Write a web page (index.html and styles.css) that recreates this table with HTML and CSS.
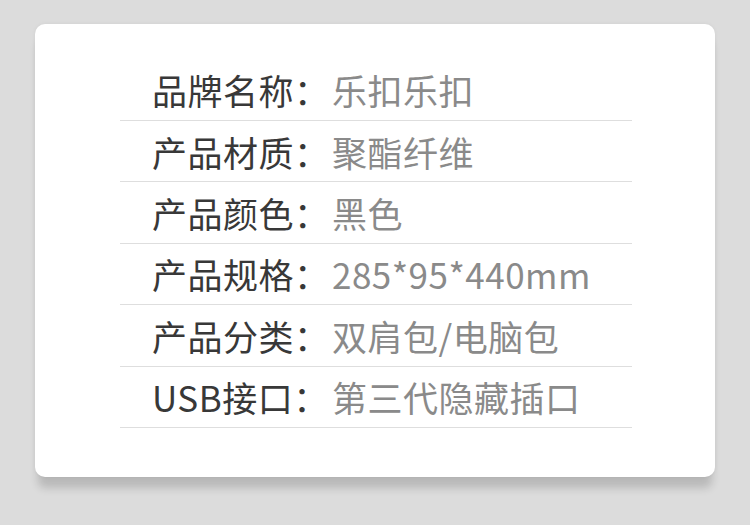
FILE: index.html
```html
<!DOCTYPE html>
<html lang="zh-CN">
<head>
    <meta charset="UTF-8">
    <meta name="viewport" content="width=device-width, initial-scale=1.0">
    <title>产品参数</title>
    <link rel="stylesheet" href="styles.css">
</head>
<body>
<div class="card">
    <div class="spec-list">
        <div class="spec-row">
            <span class="label">品牌名称：</span>
            <span class="value">乐扣乐扣</span>
        </div>
        <div class="spec-row">
            <span class="label">产品材质：</span>
            <span class="value">聚酯纤维</span>
        </div>
        <div class="spec-row">
            <span class="label">产品颜色：</span>
            <span class="value">黑色</span>
        </div>
        <div class="spec-row">
            <span class="label">产品规格：</span>
            <span class="value">285*95*440mm</span>
        </div>
        <div class="spec-row">
            <span class="label">产品分类：</span>
            <span class="value">双肩包/电脑包</span>
        </div>
        <div class="spec-row">
            <span class="label">USB接口：</span>
            <span class="value">第三代隐藏插口</span>
        </div>
    </div>
</div>
</body>
</html>
```

FILE: styles.css
```css
body {
    margin: 0;
    padding: 24px 35px;
    background-color: #dcdcdc;
    font-family: "Noto Sans CJK SC", "Noto Sans", sans-serif;
}
.card {
    width: 680px;
    height: 453px;
    box-sizing: border-box;
    background-color: #fff;
    border-radius: 10px;
    padding: 35.6px 83px 0 85px;
    box-shadow: 0 14px 8px -3px rgba(0, 0, 0, 0.16), 0 0 4px rgba(0, 0, 0, 0.05);
}
.spec-row {
    display: flex;
    align-items: center;
    height: 61.4px;
    box-sizing: border-box;
    padding-left: 32px;
    border-bottom: 1px solid #dedede;
    font-size: 35px;
    letter-spacing: 0.5px;
}
.label {
    width: 180px;
    flex-shrink: 0;
    color: #383838;
}
.value {
    color: #8a8a8a;
}
```
